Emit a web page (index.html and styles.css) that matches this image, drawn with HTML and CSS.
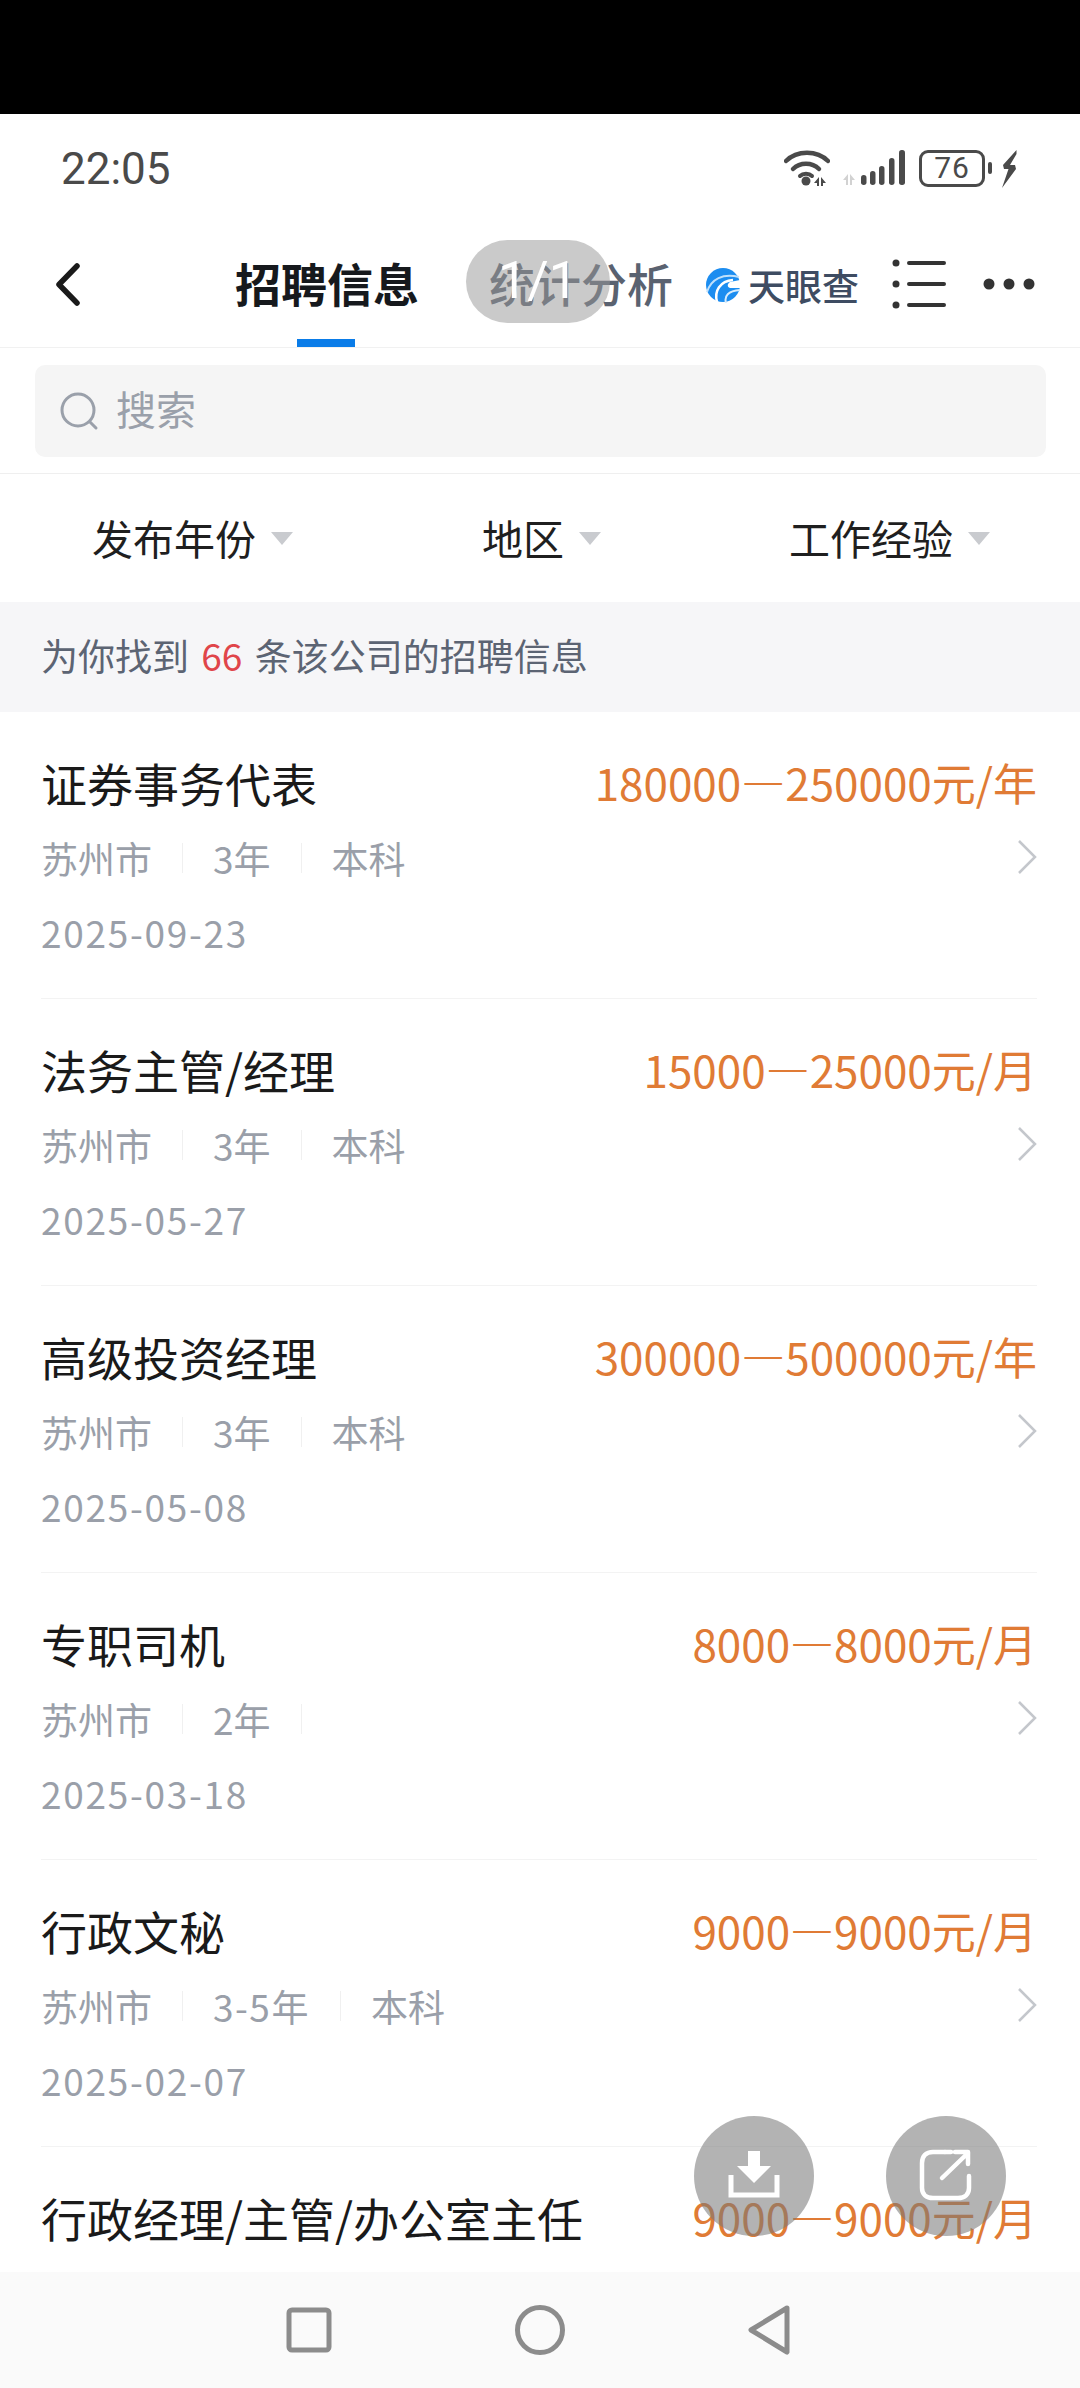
FILE: index.html
```html
<!DOCTYPE html>
<html lang="zh">
<head>
<meta charset="UTF-8">
<meta name="viewport" content="width=device-width, initial-scale=1.0">
<title>招聘信息</title>
<link rel="stylesheet" href="styles.css">
</head>
<body>
  <div class="screen">
    <div class="topBlack"></div>

    <div class="statusBar">
      <span class="time">22:05</span>
      <div class="statusIcons">
        <svg class="wifi" width="46" height="38" viewBox="0 0 46 38">
          <path d="M2 11C13 0 33 0 44 11" fill="none" stroke="#4a4a4a" stroke-width="4.5" stroke-linecap="round"/>
          <path d="M9 19C16 12 28 12 35 19" fill="none" stroke="#4a4a4a" stroke-width="4.5" stroke-linecap="round"/>
          <path d="M16 26C19 23 25 23 28 26" fill="none" stroke="#4a4a4a" stroke-width="4" stroke-linecap="round"/>
          <circle cx="22" cy="31" r="4.5" fill="#4a4a4a"/>
          <path d="M35 27v9h-2v-3h-3zM37 27v9h2v-3h3z" fill="#4a4a4a"/>
        </svg>
        <svg class="signal" width="62" height="36" viewBox="0 0 62 36">
          <path d="M5 24v11H3v-5H0zM7 24v11h2v-5h3z" fill="#d2d2d2"/>
          <rect x="18" y="25" width="5.5" height="10" rx="2.7" fill="#4a4a4a"/>
          <rect x="27" y="21" width="5.5" height="14" rx="2.7" fill="#4a4a4a"/>
          <rect x="36" y="16" width="5.5" height="19" rx="2.7" fill="#4a4a4a"/>
          <rect x="46" y="8" width="5.5" height="27" rx="2.7" fill="#4a4a4a"/>
          <rect x="56" y="0" width="6" height="35" rx="2.7" fill="#4a4a4a"/>
        </svg>
        <div class="battery"><span>76</span></div>
        <div class="batteryNub"></div>
        <svg class="bolt" width="16" height="38" viewBox="0 0 16 38">
          <path d="M15.5 0L2 15l1 4 4.500 0L1 38l14-19-1-4-5 0 6.500-11z" fill="#4a4a4a"/>
        </svg>
      </div>
    </div>

    <div class="navTabs">
      <svg class="backIcon" width="25" height="43" viewBox="0 0 25 43">
        <path d="M22 3L4 21.5 22 40" fill="none" stroke="#1a1a1a" stroke-width="5.5" stroke-linecap="round" stroke-linejoin="round"/>
      </svg>
      <div class="tab tabActive">招聘信息</div>
      <div class="tab tabOther">统计分析</div>
      <div class="logo">
        <svg width="34" height="36" viewBox="0 0 34 36">
          <circle cx="17" cy="18" r="17" fill="#1c8df0"/>
          <path d="M1 25C5 12 17 6 33 10" fill="none" stroke="#bfe0fb" stroke-width="2"/>
          <path d="M11 35C8 24 14 14 27 13" fill="none" stroke="#fff" stroke-width="2.5"/>
          <path d="M20 36C18 29 22 24 34 23" fill="none" stroke="#d6ecfd" stroke-width="2"/>
          <path d="M34 13L24 15c-3 2-3 5 0 6l10 0z" fill="#fff"/>
        </svg>
        <span>天眼查</span>
      </div>
      <svg class="listIcon" width="54" height="50" viewBox="0 0 54 50">
        <circle cx="4" cy="4" r="3.5" fill="#333"/>
        <circle cx="4" cy="25" r="3.5" fill="#333"/>
        <circle cx="4" cy="46" r="3.5" fill="#333"/>
        <path d="M17 4h35M17 25h35M17 46h35" stroke="#333" stroke-width="4" stroke-linecap="round"/>
      </svg>
      <svg class="moreIcon" width="52" height="12" viewBox="0 0 52 12">
        <circle cx="6" cy="6" r="5.5" fill="#333"/>
        <circle cx="26" cy="6" r="5.5" fill="#333"/>
        <circle cx="46" cy="6" r="5.5" fill="#333"/>
      </svg>
    </div>

    <div class="searchWrap">
      <div class="searchBox">
        <svg width="42" height="42" viewBox="0 0 42 42">
          <circle cx="20" cy="20" r="16" fill="none" stroke="#9aa0aa" stroke-width="3"/>
          <path d="M32 32l6 6" stroke="#9aa0aa" stroke-width="3" stroke-linecap="round"/>
        </svg>
        <span>搜索</span>
      </div>
    </div>

    <div class="filters">
      <div class="filter filterYear">发布年份<i class="caret"></i></div>
      <div class="filter filterArea">地区<i class="caret"></i></div>
      <div class="filter filterExp">工作经验<i class="caret"></i></div>
    </div>

    <div class="infoBand">为你找到 <em>66</em> 条该公司的招聘信息</div>

    <div class="jobList">
      <div class="job">
        <div class="jobTop"><span class="jobTitle">证券事务代表</span><span class="jobPay">180000<b>—</b>250000元/年</span></div>
        <div class="jobMeta"><span>苏州市</span><span>3年</span><span>本科</span></div>
        <div class="jobDate">2025-09-23</div>
        <svg class="chevron" width="20" height="36" viewBox="0 0 20 36"><path d="M2 2l16 16L2 34" fill="none" stroke="#c4c7cc" stroke-width="2.5"/></svg>
      </div>
      <div class="job">
        <div class="jobTop"><span class="jobTitle">法务主管/经理</span><span class="jobPay">15000<b>—</b>25000元/月</span></div>
        <div class="jobMeta"><span>苏州市</span><span>3年</span><span>本科</span></div>
        <div class="jobDate">2025-05-27</div>
        <svg class="chevron" width="20" height="36" viewBox="0 0 20 36"><path d="M2 2l16 16L2 34" fill="none" stroke="#c4c7cc" stroke-width="2.5"/></svg>
      </div>
      <div class="job">
        <div class="jobTop"><span class="jobTitle">高级投资经理</span><span class="jobPay">300000<b>—</b>500000元/年</span></div>
        <div class="jobMeta"><span>苏州市</span><span>3年</span><span>本科</span></div>
        <div class="jobDate">2025-05-08</div>
        <svg class="chevron" width="20" height="36" viewBox="0 0 20 36"><path d="M2 2l16 16L2 34" fill="none" stroke="#c4c7cc" stroke-width="2.5"/></svg>
      </div>
      <div class="job">
        <div class="jobTop"><span class="jobTitle">专职司机</span><span class="jobPay">8000<b>—</b>8000元/月</span></div>
        <div class="jobMeta"><span>苏州市</span><span>2年</span><span></span></div>
        <div class="jobDate">2025-03-18</div>
        <svg class="chevron" width="20" height="36" viewBox="0 0 20 36"><path d="M2 2l16 16L2 34" fill="none" stroke="#c4c7cc" stroke-width="2.5"/></svg>
      </div>
      <div class="job">
        <div class="jobTop"><span class="jobTitle">行政文秘</span><span class="jobPay">9000<b>—</b>9000元/月</span></div>
        <div class="jobMeta"><span>苏州市</span><span class="wideYears">3-5年</span><span>本科</span></div>
        <div class="jobDate">2025-02-07</div>
        <svg class="chevron" width="20" height="36" viewBox="0 0 20 36"><path d="M2 2l16 16L2 34" fill="none" stroke="#c4c7cc" stroke-width="2.5"/></svg>
      </div>
      <div class="job">
        <div class="jobTop"><span class="jobTitle">行政经理/主管/办公室主任</span><span class="jobPay">9000<b>—</b>9000元/月</span></div>
      </div>
    </div>

    <div class="bottomNav">
      <svg width="46" height="46" viewBox="0 0 46 46"><rect x="3" y="3" width="40" height="40" rx="3" fill="none" stroke="#8c8c8c" stroke-width="5"/></svg>
      <svg width="50" height="50" viewBox="0 0 50 50"><circle cx="25" cy="25" r="22.5" fill="none" stroke="#8c8c8c" stroke-width="5"/></svg>
      <svg width="44" height="50" viewBox="0 0 44 50"><path d="M39 3L3 25l36 22z" fill="none" stroke="#8c8c8c" stroke-width="5" stroke-linejoin="round"/></svg>
    </div>

    <!-- overlays -->
    <div class="pagePill">1/1</div>
    <div class="fab fabDown">
      <svg width="52" height="50" viewBox="0 0 52 50">
        <path d="M20 1h12v15h11L26 33 9 16h11z" fill="#fff"/>
        <path d="M3 25v20h46V25" fill="none" stroke="#fff" stroke-width="5"/>
      </svg>
    </div>
    <div class="fab fabShare">
      <svg width="54" height="52" viewBox="0 0 54 52">
        <path d="M26 3H14C7 3 3 7 3 14v25c0 6 4 10 11 10h25c7 0 11-4 11-10V27" fill="none" stroke="#fff" stroke-width="4.500" stroke-linecap="round"/>
        <path d="M26 3h6M23 29L49 4M36 3h13v12" fill="none" stroke="#fff" stroke-width="4.500" stroke-linecap="round" stroke-linejoin="round"/>
      </svg>
    </div>
  </div>
</body>
</html>
```

FILE: styles.css
```css
* {
  box-sizing: border-box;
}

body {
  margin: 0;
  padding: 0;
  background: #fff;
  font-family: "Noto Sans CJK SC", "Noto Sans", sans-serif;
}

.screen {
  position: relative;
  width: 1080px;
  height: 2388px;
  overflow: hidden;
  display: flex;
  flex-direction: column;
  background: #fff;
}

.topBlack {
  height: 114px;
  background: #000;
  flex-shrink: 0;
}

/* status bar */
.statusBar {
  height: 116px;
  flex-shrink: 0;
  display: flex;
  align-items: flex-start;
  justify-content: space-between;
  padding: 36px 63px 0 61px;
}

.time {
  font-family: Roboto, sans-serif;
  font-size: 44px;
  line-height: 38px;
  color: #4a4a4a;
}

.statusIcons {
  display: flex;
  align-items: flex-start;
}

.signal {
  margin-left: 13px;
}

.battery {
  width: 66px;
  height: 37px;
  margin-left: 14px;
  border: 3px solid #4a4a4a;
  border-radius: 9px;
  text-align: center;
  font-family: Roboto, sans-serif;
  font-size: 30px;
  letter-spacing: 1px;
  line-height: 30px;
  color: #4a4a4a;
}

.batteryNub {
  width: 4px;
  height: 12px;
  margin: 12px 0 0 3px;
  background: #4a4a4a;
  border-radius: 2px;
}

.bolt {
  margin-left: 9px;
}

/* tabs */
.navTabs {
  height: 118px;
  flex-shrink: 0;
  display: flex;
  align-items: center;
  padding-left: 55px;
  border-bottom: 1px solid #f1f1f1;
}

.backIcon {
  margin-top: -8px;
}

.tab {
  font-size: 46px;
  line-height: 60px;
  margin-top: -14px;
  white-space: nowrap;
}

.tabActive {
  position: relative;
  margin-left: 155px;
  font-weight: 700;
  color: #16191d;
}

.tabActive::after {
  content: "";
  position: absolute;
  left: 62px;
  bottom: -35px;
  width: 58px;
  height: 8px;
  background: #0a7ce8;
}

.tabOther {
  margin-left: 70px;
  font-weight: 500;
  color: #5a6270;
}

.logo {
  display: flex;
  align-items: center;
  margin-left: 33px;
  margin-top: -8px;
}

.logo span {
  margin-left: 8px;
  font-size: 37px;
  line-height: 40px;
  font-weight: 500;
  color: #3e4c62;
}

.listIcon {
  margin-left: 33px;
  margin-top: -10px;
}

.moreIcon {
  margin-left: 37px;
  margin-top: -10px;
}

/* search */
.searchWrap {
  height: 126px;
  flex-shrink: 0;
  padding: 17px 34px 0 35px;
  border-bottom: 1px solid #efefef;
}

.searchBox {
  height: 92px;
  background: #f5f5f5;
  border-radius: 10px;
  display: flex;
  align-items: center;
  padding-left: 23px;
  gap: 16px;
  font-size: 40px;
  color: #9aa0aa;
}

.searchBox span {
  margin-top: -6px;
}

/* filters */
.filters {
  height: 128px;
  flex-shrink: 0;
  display: flex;
  align-items: center;
  padding-bottom: 3px;
  font-size: 41px;
  color: #1f1f1f;
}

.filter {
  display: flex;
  align-items: center;
  white-space: nowrap;
}

.filterYear {
  margin-left: 92px;
}

.filterArea {
  margin-left: 189px;
}

.filterExp {
  margin-left: 188px;
}

.caret {
  width: 0;
  height: 0;
  margin-left: 15px;
  margin-top: 4px;
  border-left: 11px solid transparent;
  border-right: 11px solid transparent;
  border-top: 13px solid #c9cbcf;
}

.infoBand {
  height: 110px;
  flex-shrink: 0;
  background: #f6f6f8;
  padding-left: 41px;
  font-size: 37px;
  word-spacing: 4px;
  line-height: 107px;
  color: #5c6473;
}

.infoBand em {
  font-style: normal;
  color: #e0454a;
}

/* job rows */
.jobList {
  flex: 1;
  overflow: hidden;
  padding: 0 43px 0 41px;
}

.job {
  position: relative;
  height: 287px;
  padding-top: 40px;
  border-bottom: 1px solid #f3f3f3;
}

.jobTop {
  display: flex;
  justify-content: space-between;
  align-items: center;
  height: 60px;
  white-space: nowrap;
}

.jobTitle {
  font-size: 46px;
  color: #1a1a1a;
}

.jobPay {
  font-size: 44px;
  color: #e07b35;
}

.jobPay b {
  font-weight: 700;
}

.jobMeta {
  display: flex;
  align-items: center;
  height: 50px;
  margin-top: 21px;
  font-size: 37px;
  color: #9a9fa9;
}

.jobMeta span {
  padding-right: 30px;
  margin-right: 30px;
  border-right: 1px solid #f0f0f0;
  line-height: 30px;
}

.jobMeta .wideYears {
  letter-spacing: 1.5px;
}

.jobMeta span:last-child {
  border-right: none;
}

.jobDate {
  margin-top: 24px;
  font-size: 37px;
  letter-spacing: 1.7px;
  line-height: 50px;
  color: #9a9fa9;
}

.chevron {
  position: absolute;
  right: 0;
  top: 127px;
}

/* bottom nav */
.bottomNav {
  height: 116px;
  flex-shrink: 0;
  background: #fafafa;
  display: flex;
  align-items: center;
  padding: 0 288px 0 286px;
  justify-content: space-between;
}

/* overlays */
.pagePill {
  position: absolute;
  left: 466px;
  top: 240px;
  width: 144px;
  height: 83px;
  border-radius: 42px;
  background: rgba(152, 152, 152, 0.515);
  text-align: center;
  font-family: Roboto, sans-serif;
  font-size: 52px;
  line-height: 82px;
  color: #fff;
}

.fab {
  position: absolute;
  top: 2116px;
  width: 120px;
  height: 120px;
  border-radius: 50%;
  background: rgba(120, 120, 120, 0.56);
  display: flex;
  align-items: center;
  justify-content: center;
}

.fabDown {
  left: 694px;
}

.fabShare {
  left: 886px;
}

.fab svg {
  margin-top: -3px;
}
```
